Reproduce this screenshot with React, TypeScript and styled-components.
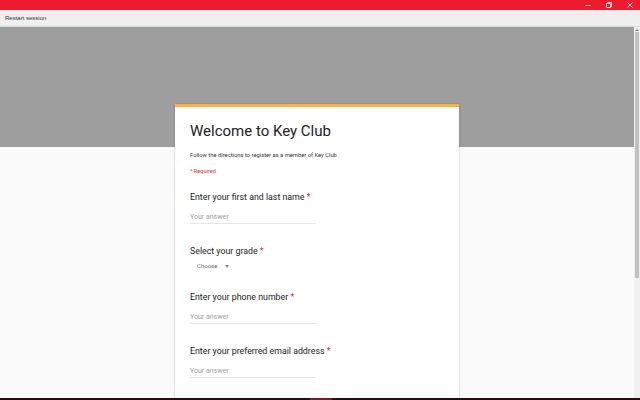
import styled, { createGlobalStyle } from "styled-components";

const Global = createGlobalStyle`
  html, body { margin: 0; padding: 0; }
  body { overflow: hidden; background: #fafafa; }
`;

const Window = styled.div`
  width: 640px;
  height: 400px;
  display: flex;
  flex-direction: column;
  font-family: Roboto, "Noto Sans", Arial, sans-serif;
`;

const TitleBar = styled.div`
  height: 10px;
  background: #ed1b2e;
  display: flex;
  justify-content: flex-end;
  align-items: center;
  flex-shrink: 0;
`;

const Ctrl = styled.div`
  width: 21px;
  height: 10px;
  display: flex;
  align-items: center;
  justify-content: center;
`;

const MenuBar = styled.div`
  height: 16px;
  background: #efefef;
  border-bottom: 1px solid #d6d6d6;
  display: flex;
  align-items: center;
  padding-left: 5px;
  font-family: "Liberation Sans", Arial, sans-serif;
  font-size: 6px;
  color: #333;
  flex-shrink: 0;
`;

const Main = styled.div`
  flex: 1;
  display: flex;
  min-height: 0;
`;

const Content = styled.div`
  flex: 1;
  background: linear-gradient(#9e9e9e 0 120px, #fafafa 120px);
  overflow: hidden;
`;

const Scrollbar = styled.div`
  width: 6px;
  background: #f0f0f0;
  display: flex;
  flex-direction: column;
  align-items: center;
  padding-top: 1px;
  gap: 1px;
`;

const ScrollArrow = styled.div`
  width: 0;
  height: 0;
  margin-top: 1px;
  border-left: 2px solid transparent;
  border-right: 2px solid transparent;
  border-bottom: 2px solid #777;
`;

const Thumb = styled.div`
  width: 4px;
  height: 246px;
  background: #c1c1c1;
`;

const Taskbar = styled.div`
  height: 2px;
  background: #2b0b10;
  display: flex;
  justify-content: center;
  flex-shrink: 0;
`;

const TaskItem = styled.div`
  width: 22px;
  margin-left: 2px;
  background: #8a1322;
`;

const Card = styled.div`
  width: 284px;
  margin: 77px auto 0;
  background: #fff;
  border-top: 3px solid #fbb345;
  box-shadow: 0 0 1px rgba(0, 0, 0, 0.25), 0 1px 2px rgba(0, 0, 0, 0.12);
  padding: 14px 16px 40px 15px;
  box-sizing: border-box;
  min-height: 400px;
`;

const Title = styled.h1`
  margin: 0;
  font-size: 15px;
  font-weight: 400;
  line-height: 20px;
  color: #222;
`;

const Description = styled.div`
  margin-top: 10px;
  font-size: 5.8px;
  line-height: 8px;
  color: #333;
`;

const Required = styled.div`
  margin-top: 8px;
  font-size: 5.6px;
  line-height: 8px;
  color: #d93025;
`;

const Question = styled.div<{ $gap: number }>`
  margin-top: ${(p) => p.$gap}px;
`;

const Label = styled.div`
  font-size: 8.8px;
  line-height: 12px;
  color: #222;
  span {
    color: #d93025;
  }
`;

const Answer = styled.div`
  margin-top: 9px;
  width: 126px;
  font-size: 7px;
  line-height: 10px;
  padding-bottom: 1px;
  color: #a0a0a0;
  border-bottom: 1px solid #e6e6e6;
`;

const Select = styled.div`
  margin-top: 4px;
  margin-left: 7px;
  display: flex;
  align-items: center;
  gap: 8px;
  font-size: 6px;
  line-height: 10px;
  color: #666;
`;

const Caret = styled.div`
  width: 0;
  height: 0;
  border-left: 2.5px solid transparent;
  border-right: 2.5px solid transparent;
  border-top: 3px solid #888;
`;

const questions = [
  { label: "Enter your first and last name", type: "text", gap: 16 },
  { label: "Select your grade", type: "select", gap: 21 },
  { label: "Enter your phone number", type: "text", gap: 20 },
  { label: "Enter your preferred email address", type: "text", gap: 21 },
];

function App() {
  return (
    <Window>
      <Global />
      <TitleBar>
        <Ctrl>
          <svg width="6" height="6" viewBox="0 0 6 6">
            <path d="M0.5 3.5h5" stroke="#fff" strokeWidth="0.8" />
          </svg>
        </Ctrl>
        <Ctrl>
          <svg width="6" height="6" viewBox="0 0 6 6">
            <path d="M0.5 1.5h4v4h-4z M1.5 1.5v-1h4v4h-1" stroke="#fff" strokeWidth="0.8" fill="none" />
          </svg>
        </Ctrl>
        <Ctrl>
          <svg width="6" height="6" viewBox="0 0 6 6">
            <path d="M0.5 0.5l5 5M5.5 0.5l-5 5" stroke="#fff" strokeWidth="0.8" />
          </svg>
        </Ctrl>
      </TitleBar>
      <MenuBar>Restart session</MenuBar>
      <Main>
        <Content>
          <Card>
            <Title>Welcome to Key Club</Title>
            <Description>Follow the directions to register as a member of Key Club</Description>
            <Required>* Required</Required>
            {questions.map((q) => (
              <Question key={q.label} $gap={q.gap}>
                <Label>
                  {q.label} <span>*</span>
                </Label>
                {q.type === "text" ? (
                  <Answer>Your answer</Answer>
                ) : (
                  <Select>
                    Choose
                    <Caret />
                  </Select>
                )}
              </Question>
            ))}
          </Card>
        </Content>
        <Scrollbar>
          <ScrollArrow />
          <Thumb />
        </Scrollbar>
      </Main>
      <Taskbar>
        <TaskItem />
      </Taskbar>
    </Window>
  );
}

export default App;
